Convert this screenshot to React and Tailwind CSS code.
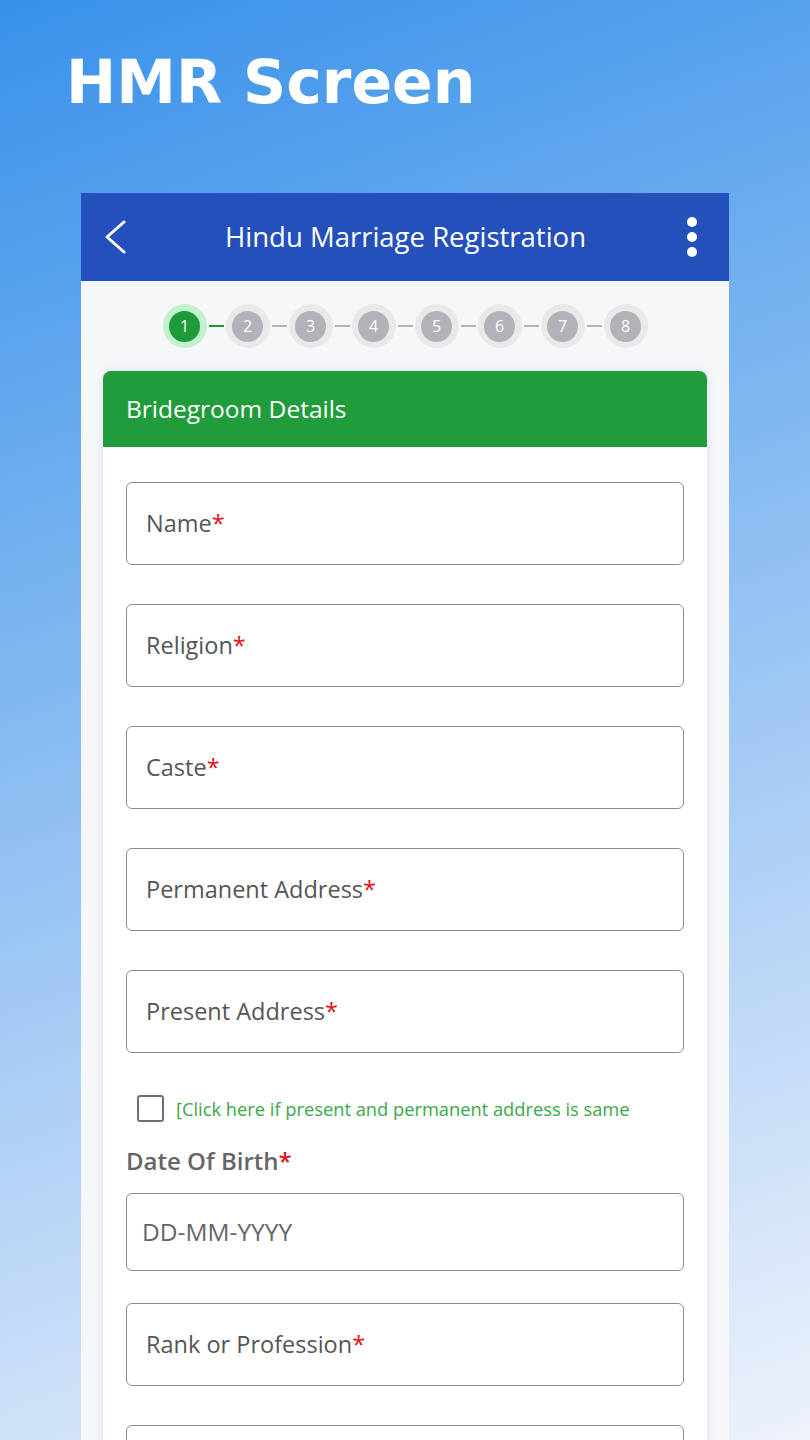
const font = "font-['Open_Sans','Noto_Sans',sans-serif]";

const Field = ({ label }) => (
  <div className="h-[83px] rounded-md border-[1.5px] border-[#8d8d8d] flex items-center px-[19px]">
    {label && (
      <span className="text-[23.5px] text-[#555]">
        {label}
        <span className="text-[#e0141e]">*</span>
      </span>
    )}
  </div>
);

const Stepper = () => (
  <div className="flex items-center justify-center h-[90px]">
    {[1, 2, 3, 4, 5, 6, 7, 8].map((n) => (
      <div key={n} className="flex items-center">
        {n > 1 && (
          <div className={`w-[15px] h-[2px] mx-[2px] ${n === 2 ? "bg-[#1a9a2e]" : "bg-[#b3b3b3]"}`} />
        )}
        <div
          className={`w-[44px] h-[44px] rounded-full flex items-center justify-center ${
            n === 1 ? "bg-[#c4f1cd]" : "bg-[#e9e9ea]"
          }`}
        >
          <div
            className={`w-[31px] h-[31px] rounded-full flex items-center justify-center text-[16px] text-white ${
              n === 1 ? "bg-[#1f9a38]" : "bg-[#b2b3b8]"
            }`}
          >
            {n}
          </div>
        </div>
      </div>
    ))}
  </div>
);

export default function App() {
  return (
    <div className={`w-[810px] h-[1440px] overflow-hidden bg-linear-[160deg] from-[#3891ea] to-[#eef2fb] ${font}`}>
      <h1 className="pl-[66px] pt-[52px] h-[193px] text-[60px] leading-none font-bold text-white font-['DejaVu_Sans',sans-serif]">
        HMR Screen
      </h1>

      <div className="mx-[81px] bg-[#f5f7f9] h-[1247px]">
        <div className="h-[88px] bg-[#2450bb] flex items-center px-[22px] text-white">
          <svg width="24" height="34" viewBox="0 0 24 34" fill="none" stroke="currentColor" strokeWidth="3" strokeLinecap="round" strokeLinejoin="round">
            <polyline points="21,2 4,17 21,32" />
          </svg>
          <span className="flex-1 text-center text-[27.5px] pl-[4px]">Hindu Marriage Registration</span>
          <div className="w-[24px] flex flex-col items-center gap-[5px] pr-[3px] box-content">
            <span className="w-[10px] h-[10px] rounded-full bg-white" />
            <span className="w-[10px] h-[10px] rounded-full bg-white" />
            <span className="w-[10px] h-[10px] rounded-full bg-white" />
          </div>
        </div>

        <Stepper />

        <div className="mx-[22px] bg-white rounded-t-lg shadow-[0_0_8px_rgba(90,110,200,0.18)] h-[1100px]">
          <div className="h-[76px] bg-[#219c3c] rounded-t-lg flex items-center px-[23px] text-white text-[24.5px]">
            Bridegroom Details
          </div>
          <div className="px-[23px] pt-[35px] flex flex-col">
            <div className="flex flex-col gap-[39px]">
              <Field label="Name" />
              <Field label="Religion" />
              <Field label="Caste" />
              <Field label="Permanent Address" />
              <Field label="Present Address" />
            </div>

            <label className="flex items-center gap-[12px] pl-[11px] mt-[42px]">
              <span className="w-[27px] h-[27px] rounded-[3px] border-2 border-[#6f6f6f]" />
              <span className="text-[18.3px] text-[#3ba84a]">[Click here if present and permanent address is same</span>
            </label>

            <div className="mt-[21px] text-[24px] font-semibold text-[#666]">
              Date Of Birth<span className="text-[#e0141e]">*</span>
            </div>

            <div className="mt-[14px] h-[78px] rounded-md border-[1.5px] border-[#8d8d8d] flex items-center px-[15px]">
              <span className="text-[24.5px] text-[#666]">DD-MM-YYYY</span>
            </div>

            <div className="mt-[32px] flex flex-col gap-[39px]">
              <Field label="Rank or Profession" />
              <Field label="" />
            </div>
          </div>
        </div>
      </div>
    </div>
  );
}
